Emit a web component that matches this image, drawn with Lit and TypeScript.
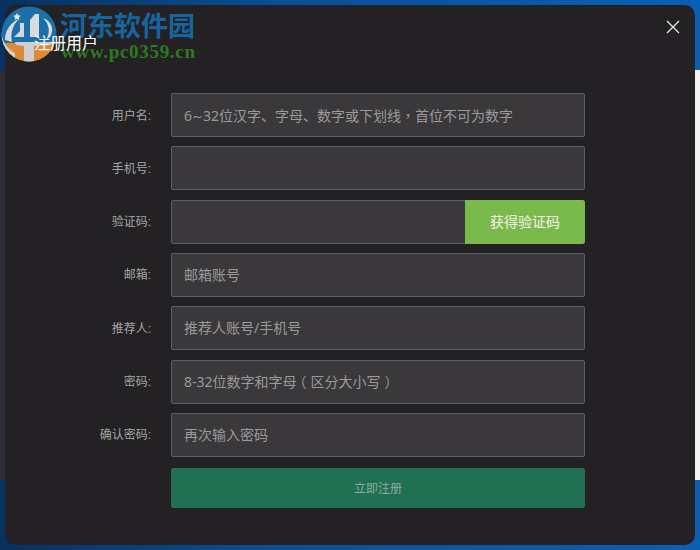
import { LitElement, html, css, svg, TemplateResult } from 'lit';
import { customElement } from 'lit/decorators.js';

interface Field {
  label: string;
  hint?: TemplateResult;
  action?: string;
}

// the reference centres these punctuation marks and has a wide tilde, hence the spans
const FIELDS: Field[] = [
  {
    label: '用户名:',
    hint: html`6<span class="tilde">~</span>32位汉字、字母、数字或下划线<span class="mid">，</span>首位不可为数字`,
  },
  { label: '手机号:' },
  { label: '验证码:', action: '获得验证码' },
  { label: '邮箱:', hint: html`邮箱账号` },
  { label: '推荐人:', hint: html`推荐人账号/手机号` },
  {
    label: '密码:',
    hint: html`8-32位数字和字母<span class="paren-open">（</span>区分大小写<span class="paren-close">）</span>`,
  },
  { label: '确认密码:', hint: html`再次输入密码` },
];

const LOGO = svg`
  <svg class="logo-mark" viewBox="0 0 56 56" width="56" height="56">
    <defs><clipPath id="disk"><circle cx="28" cy="28" r="27.5"/></clipPath></defs>
    <g clip-path="url(#disk)">
      <rect width="56" height="56" fill="#1c6fa9"/>
      <rect y="37" width="56" height="19" fill="#dc8a33"/>
      <path d="M0 26 C2 38 8 44 14 47 L14 56 L0 56 Z" fill="#d2d2d2"/>
      <path d="M4 34 C4 24 10 16 18 13 C12 19 9 27 11 36 Z" fill="#d8d8d8"/>
      <path d="M13 31 L19 25 L19 17 L23 17 L23 31 Z" fill="#d4d8dc"/>
      <path d="M14 36 L51 36 L49 39 L33 40 L33 56 L23 56 L23 40 L15 39 Z" fill="#cfcfcf"/>
      <path d="M29 14 L34 8 L38 8 L38 31 L29 31 Z" fill="#d8dce0"/>
      <path d="M42 12 C50 15 54 23 49 31 L45 34 C50 26 48 18 42 12 Z" fill="#dedede"/>
    </g>
    <path d="M16 7 l1.2 2.3 l2.5 .4 l-1.8 1.8 l.4 2.5 l-2.3 -1.2 l-2.3 1.2 l.4 -2.5 l-1.8 -1.8 l2.5 -.4 z" fill="#e8e8e8"/>
  </svg>
`;

@customElement('app-root')
export class AppRoot extends LitElement {
  static styles = css`
    :host {
      display: block;
      width: 700px;
      height: 550px;
      overflow: hidden;
      box-sizing: border-box;
      padding: 5px;
      font-family: 'Liberation Sans', 'Noto Sans CJK SC', sans-serif;
      background:
        linear-gradient(90deg, #2c2c38 0, #2c2c38 6px, transparent 6px) 0 70px / 100% 410px no-repeat,
        linear-gradient(90deg, transparent 695px, #f4f4f4 695px) 0 70px / 100% 410px no-repeat,
        linear-gradient(90deg, #07315f 0, #0a4f98 40%, #0a60b5 100%);
    }

    .dialog {
      position: relative;
      box-sizing: border-box;
      height: 540px;
      padding: 88px 110px 0 0;
      background: #232124;
      border-radius: 10px;
    }

    .title {
      position: absolute;
      left: 29px;
      top: 29px;
      font-size: 16px;
      line-height: 20px;
      color: #fff;
    }

    .close {
      position: absolute;
      right: 15px;
      top: 15px;
      width: 14px;
      height: 14px;
    }

    .watermark {
      position: absolute;
      left: -4px;
      top: 1px;
      width: 200px;
      height: 60px;
      pointer-events: none;
    }

    .logo-mark {
      position: absolute;
      left: 0;
      top: 0;
    }

    .wm-name {
      position: absolute;
      left: 59px;
      top: 3px;
      font-family: 'Noto Sans CJK SC', sans-serif;
      font-size: 27px;
      font-weight: 700;
      line-height: 32px;
      color: #17659f;
      white-space: nowrap;
    }

    .wm-url {
      position: absolute;
      left: 60px;
      top: 36px;
      font-family: 'Liberation Serif', serif;
      font-size: 19px;
      font-weight: 700;
      line-height: 20px;
      letter-spacing: 0.7px;
      color: #2c7a1e;
      white-space: nowrap;
    }

    form {
      display: flex;
      flex-direction: column;
      gap: 9.33px;
      margin: 0;
    }

    .row {
      display: flex;
      align-items: center;
      justify-content: flex-end;
      height: 44px;
    }

    label {
      flex: 0 0 auto;
      margin: 0 20px 2px 0;
      font-size: 12px;
      color: #a5a5a5;
      white-space: nowrap;
    }

    .control {
      position: relative;
      display: flex;
      flex: 0 0 414px;
      box-sizing: border-box;
      height: 44px;
      border: 1px solid #5b5f68;
      border-radius: 2px;
      background: #3a383b;
    }

    input {
      flex: 1;
      min-width: 0;
      padding: 0 12px;
      border: 0;
      outline: 0;
      background: transparent;
      font: inherit;
      font-size: 14px;
      color: #ddd;
    }

    .hint {
      position: absolute;
      left: 12px;
      top: 0;
      font-family: 'Noto Sans', 'Noto Sans CJK SC', sans-serif;
      font-size: 14px;
      line-height: 42px;
      color: #9a9a9a;
      white-space: nowrap;
      pointer-events: none;
    }

    .tilde {
      font-family: 'DejaVu Sans', sans-serif;
      font-size: 13px;
    }

    .mid {
      font-family: 'Noto Sans CJK TC', sans-serif;
    }

    .paren-open,
    .paren-close {
      position: relative;
    }

    .paren-open {
      left: -4px;
    }

    .paren-close {
      left: 4px;
    }

    .action {
      flex: 0 0 120px;
      margin: -1px;
      padding: 0 0 2px;
      border: 0;
      border-radius: 0 3px 3px 0;
      background: #7aba4c;
      font: inherit;
      font-size: 14px;
      color: #f2f7ec;
    }

    .submit-row {
      display: flex;
      justify-content: flex-end;
      margin-top: 2px;
    }

    .submit {
      width: 414px;
      height: 40px;
      padding: 0 0 2px;
      border: 1px solid #2a6a50;
      border-radius: 2px;
      background: #217054;
      font: inherit;
      font-size: 12px;
      color: #8eab9e;
    }
  `;

  private renderField(field: Field) {
    return html`
      <div class="row">
        <label>${field.label}</label>
        <div class="control">
          <input type="text" />
          ${field.hint ? html`<span class="hint">${field.hint}</span>` : null}
          ${field.action
            ? html`<button type="button" class="action">${field.action}</button>`
            : null}
        </div>
      </div>
    `;
  }

  render() {
    return html`
      <div class="dialog">
        <svg class="close" viewBox="0 0 14 14">
          <path d="M1 1 L13 13 M13 1 L1 13" stroke="#e4e4e4" stroke-width="1.4" fill="none"/>
        </svg>
        <form>
          ${FIELDS.map(field => this.renderField(field))}
          <div class="submit-row">
            <button type="button" class="submit">立即注册</button>
          </div>
        </form>
        <div class="watermark">
          ${LOGO}
          <div class="wm-name">河东软件园</div>
          <div class="wm-url">www.pc0359.cn</div>
        </div>
        <div class="title">注册用户</div>
      </div>
    `;
  }
}
